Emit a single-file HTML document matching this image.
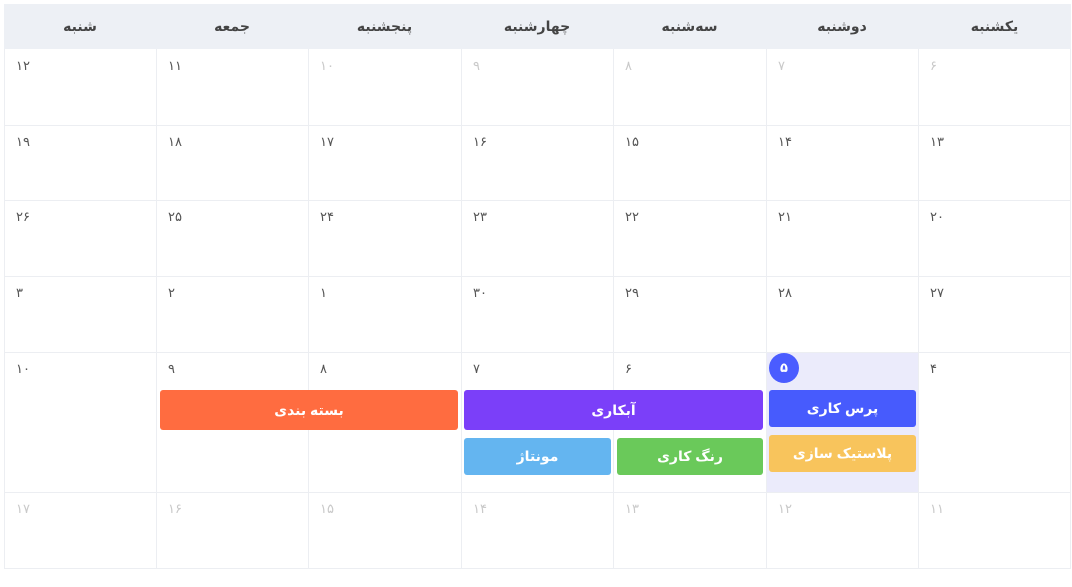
<!DOCTYPE html><html><head><meta charset="utf-8"><style>
body{margin:0;width:1072px;height:587px;background:#fff;position:relative;overflow:hidden;font-family:"Liberation Sans","DejaVu Sans",sans-serif}
.a{position:absolute;box-sizing:border-box}
.h{top:4px;height:45px;line-height:45px;text-align:center;color:#444;font-size:14px;font-weight:bold;background:#edf0f5}
.vl{width:1px;background:#eceef2}
.hl{height:1px;background:#eceef2}
.d{font-size:13px;color:#555;line-height:16px}
.g{color:#c9c9c9}
.e{color:#fff;font-weight:bold;font-size:14px;text-align:center;border-radius:3px}
</style></head><body>
<div class="a" style="left:766px;top:352px;width:152px;height:140px;background:#ebebfb"></div>
<div id="g"></div>
<script>
var xs=[4,156,308,461,613,766,918,1071],ys=[49,125,200,276,352,492,568];
var names=["شنبه","جمعه","پنجشنبه","چهارشنبه","سه‌شنبه","دوشنبه","یکشنبه"];
var fa="۰۱۲۳۴۵۶۷۸۹";function p(n){return String(n).replace(/\d/g,function(c){return fa[c]})}
var rows=[[12,11,10,9,8,7,6],[19,18,17,16,15,14,13],[26,25,24,23,22,21,20],[3,2,1,30,29,28,27],[10,9,8,7,6,5,4],[17,16,15,14,13,12,11]];
var grey=function(r,c){return (r==0&&c>=2)||r==5};
var h="";
for(var i=0;i<7;i++)h+='<div class="a h" style="left:'+xs[i]+'px;width:'+(xs[i+1]-xs[i])+'px">'+names[i]+'</div>';
for(var i=0;i<8;i++)h+='<div class="a vl" style="left:'+(i==7?1070:xs[i])+'px;top:49px;height:519px"></div>';
for(var j=1;j<7;j++)h+='<div class="a hl" style="left:4px;width:1067px;top:'+ys[j]+'px"></div>';
for(var r=0;r<6;r++)for(var c=0;c<7;c++){if(r==4&&c==5)continue;h+='<div class="a d'+(grey(r,c)?' g':'')+'" style="left:'+(xs[c]+12)+'px;top:'+(ys[r]+9)+'px">'+p(rows[r][c])+'</div>';}
document.getElementById("g").innerHTML=h;
</script>
<div class="a" style="left:769px;top:353px;width:30px;height:30px;border-radius:50%;background:#4a5cff;color:#fff;font-size:13px;font-weight:bold;text-align:center;line-height:30px">۵</div>
<div class="a e" style="left:769px;top:390px;width:147px;height:37px;line-height:37px;background:#475bfd">پرس کاری</div>
<div class="a e" style="left:769px;top:435px;width:147px;height:37px;line-height:37px;background:#f8c45c">پلاستیک سازی</div>
<div class="a e" style="left:464px;top:390px;width:299px;height:40px;line-height:40px;background:#7b3ff9">آبکاری</div>
<div class="a e" style="left:617px;top:438px;width:146px;height:37px;line-height:37px;background:#6ac95a">رنگ کاری</div>
<div class="a e" style="left:464px;top:438px;width:147px;height:37px;line-height:37px;background:#64b5f0">مونتاژ</div>
<div class="a e" style="left:160px;top:390px;width:298px;height:40px;line-height:40px;background:#ff6c40">بسته بندی</div>
</body></html>
